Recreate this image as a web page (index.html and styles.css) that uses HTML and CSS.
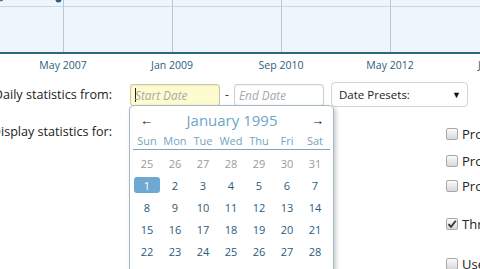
FILE: index.html
```html
<!DOCTYPE html>
<html>
<head>
<meta charset="utf-8">
<link rel="stylesheet" href="styles.css">
</head>
<body>
<div class="page">
  <div class="chart">
    <svg width="480" height="52" viewBox="0 0 480 52">
      <rect x="0" y="0" width="480" height="52" fill="#eef6fc"/>
      <line x1="0" y1="6.5" x2="480" y2="6.5" stroke="#c8d8e6" stroke-width="1"/>
      <line x1="63.5" y1="0" x2="63.5" y2="52" stroke="#b8c8d4" stroke-width="1"/>
      <line x1="172.5" y1="0" x2="172.5" y2="52" stroke="#b8c8d4" stroke-width="1"/>
      <line x1="281.5" y1="0" x2="281.5" y2="52" stroke="#b8c8d4" stroke-width="1"/>
      <line x1="390.5" y1="0" x2="390.5" y2="52" stroke="#b8c8d4" stroke-width="1"/>
      <line x1="0" y1="1" x2="3" y2="0" stroke="#3a6a8c" stroke-width="1.2"/>
      <circle cx="58.5" cy="-0.5" r="3" fill="#2c5f8a"/>
    </svg>
  </div>
  <div class="axis">
    <span class="tick">May 2007</span>
    <span class="tick">Jan 2009</span>
    <span class="tick">Sep 2010</span>
    <span class="tick">May 2012</span>
    <span class="tick">Jan 2014</span>
  </div>
  <div class="form">
    <div class="row row-dates">
      <div class="label"><span>Daily statistics from:</span></div>
      <div class="controls">
        <div class="field focus"><span class="caret"></span><span class="ph">Start Date</span></div>
        <span class="dash">-</span>
        <div class="field"><span class="ph">End Date</span></div>
        <div class="select"><span>Date Presets:</span><span class="arrow">&#9660;</span></div>
      </div>
    </div>
    <div class="row row-display">
      <div class="label label-display"><span>Display statistics for:</span></div>
      <ul class="checks">
        <li class="check"><span class="box"></span><span class="ctext">Profile views</span></li>
        <li class="check gap-s"><span class="box"></span><span class="ctext">Profile posts</span></li>
        <li class="check gap-xs"><span class="box"></span><span class="ctext">Profile post comments</span></li>
        <li class="check gap-l"><span class="box checked"><svg width="10" height="10" viewBox="0 0 10 10"><path d="M1.5 5.2 L4 7.8 L8.8 1.8" fill="none" stroke="#333" stroke-width="1.8"/></svg></span><span class="ctext">Threads</span></li>
        <li class="check gap-xl"><span class="box"></span><span class="ctext">Users</span></li>
      </ul>
    </div>
  </div>

  <div class="calendar">
    <div class="cal-head">
      <span class="nav">&larr;</span>
      <span class="title">January 1995</span>
      <span class="nav">&rarr;</span>
    </div>
    <div class="weekdays">
      <span>Sun</span><span>Mon</span><span>Tue</span><span>Wed</span><span>Thu</span><span>Fri</span><span>Sat</span>
    </div>
    <div class="days">
      <span class="other">25</span><span class="other">26</span><span class="other">27</span><span class="other">28</span><span class="other">29</span><span class="other">30</span><span class="other">31</span>
      <span class="sel">1</span><span>2</span><span>3</span><span>4</span><span>5</span><span>6</span><span>7</span>
      <span>8</span><span>9</span><span>10</span><span>11</span><span>12</span><span>13</span><span>14</span>
      <span>15</span><span>16</span><span>17</span><span>18</span><span>19</span><span>20</span><span>21</span>
      <span>22</span><span>23</span><span>24</span><span>25</span><span>26</span><span>27</span><span>28</span>
    </div>
  </div>
</div>
</body>
</html>
```

FILE: styles.css
```css
* { box-sizing: border-box; }
html, body {
  margin: 0;
  padding: 0;
  background: #ffffff;
  overflow: hidden;
}
body {
  font-family: "Open Sans", "Liberation Sans", sans-serif;
  color: #222;
}
.page {
  position: relative;
  width: 480px;
  height: 269px;
  overflow: hidden;
}
.chart {
  height: 54px;
  border-bottom: 2px solid #2b6a80;
}
.chart svg { display: block; }

.axis {
  display: flex;
  height: 21px;
  padding-left: 8.5px;
  align-items: center;
  white-space: nowrap;
}
.tick {
  flex: 0 0 109px;
  text-align: center;
  font-size: 10.5px;
  color: #2e5c7e;
  line-height: 20px;
  padding-top: 1px;
}

.form {
  display: flex;
  flex-direction: column;
}
.row {
  display: flex;
}
.row-dates {
  margin-top: 6px;
  height: 27px;
  align-items: center;
}
.label {
  flex: 0 0 112px;
  width: 112px;
  min-width: 0;
  display: flex;
  justify-content: flex-end;
  white-space: nowrap;
  font-size: 12.6px;
  color: #222;
  line-height: 20px;
}
.label span { flex: 0 0 auto; }
.controls {
  display: flex;
  align-items: center;
  margin-left: 18px;
}
.field {
  width: 90px;
  height: 22px;
  border: 1px solid #cfcfcf;
  border-radius: 3px;
  background: #fff;
  display: flex;
  align-items: center;
  padding-left: 4px;
  box-shadow: inset 0 1px 2px rgba(0,0,0,0.06);
}
.field + .field { width: 91px; }
.field.focus {
  background: #fdfbcf;
  border-color: #c9c7a8;
}
.caret {
  width: 1px;
  height: 14px;
  background: #222;
  margin-right: -1px;
}
.ph {
  font-style: italic;
  font-size: 11.8px;
  color: #a9a9a9;
  white-space: nowrap;
}
.dash {
  width: 14px;
  text-align: center;
  font-size: 12px;
  color: #333;
}
.select {
  margin-left: 7px;
  width: 137px;
  height: 25px;
  border: 1px solid #d3d3d3;
  border-radius: 4px;
  background: #fff;
  display: flex;
  align-items: center;
  justify-content: space-between;
  padding: 0 6px 0 7px;
  font-size: 11.5px;
  color: #222;
  white-space: nowrap;
}
.arrow {
  font-size: 9px;
  color: #111;
}

.row-display {
  align-items: flex-start;
}
.label-display {
  margin-top: 14px;
}
.checks {
  list-style: none;
  margin: 16px 0 0 334px;
  padding: 0;
  display: flex;
  flex-direction: column;
}
.check {
  display: flex;
  align-items: center;
  height: 20px;
  white-space: nowrap;
  font-size: 13px;
  color: #222;
}
.gap-s { margin-top: 7px; }
.gap-xs { margin-top: 5px; }
.gap-l { margin-top: 18px; }
.gap-xl { margin-top: 20px; }
.box {
  flex: 0 0 12px;
  width: 12px;
  height: 12px;
  border: 1px solid #a8a8a8;
  border-radius: 2px;
  background: linear-gradient(#fbfbfb, #d8d8d8);
  margin-right: 4px;
  display: flex;
  align-items: center;
  justify-content: center;
}
.box svg { display: block; }

.calendar {
  position: absolute;
  left: 129px;
  top: 105px;
  width: 205px;
  height: 180px;
  background: #fff;
  border: 1px solid #a4b9c7;
  border-radius: 5px;
  box-shadow: 2px 2px 4px rgba(0,0,0,0.22);
  padding: 0 3px;
  font-family: "Open Sans", "Liberation Sans", sans-serif;
}
.cal-head {
  display: flex;
  align-items: center;
  justify-content: space-between;
  height: 29px;
  padding: 0 6px 2px 7px;
}
.nav {
  font-size: 13px;
  color: #111;
  line-height: 14px;
}
.title {
  font-size: 15px;
  color: #6fa5c8;
  line-height: 20px;
}
.weekdays {
  display: grid;
  grid-template-columns: repeat(7, 28px);
  border-bottom: 1px solid #7ea7bf;
  padding-bottom: 14px;
  box-sizing: content-box;
  height: 0;
  margin-top: 0;
}
.weekdays span {
  text-align: center;
  font-size: 11px;
  line-height: 14px;
  color: #74a3c2;
  margin-top: -1px;
}
.days {
  display: grid;
  grid-template-columns: repeat(7, 28px);
  grid-auto-rows: 22px;
  margin-top: 2px;
}
.days span {
  display: flex;
  align-items: center;
  justify-content: center;
  margin: 3px 1px;
  font-size: 11px;
  color: #2b5a7c;
  border-radius: 3px;
}
.days span.other { color: #9b9b9b; }
.days span.sel {
  background: #6ea8d3;
  color: #fff;
}
```
